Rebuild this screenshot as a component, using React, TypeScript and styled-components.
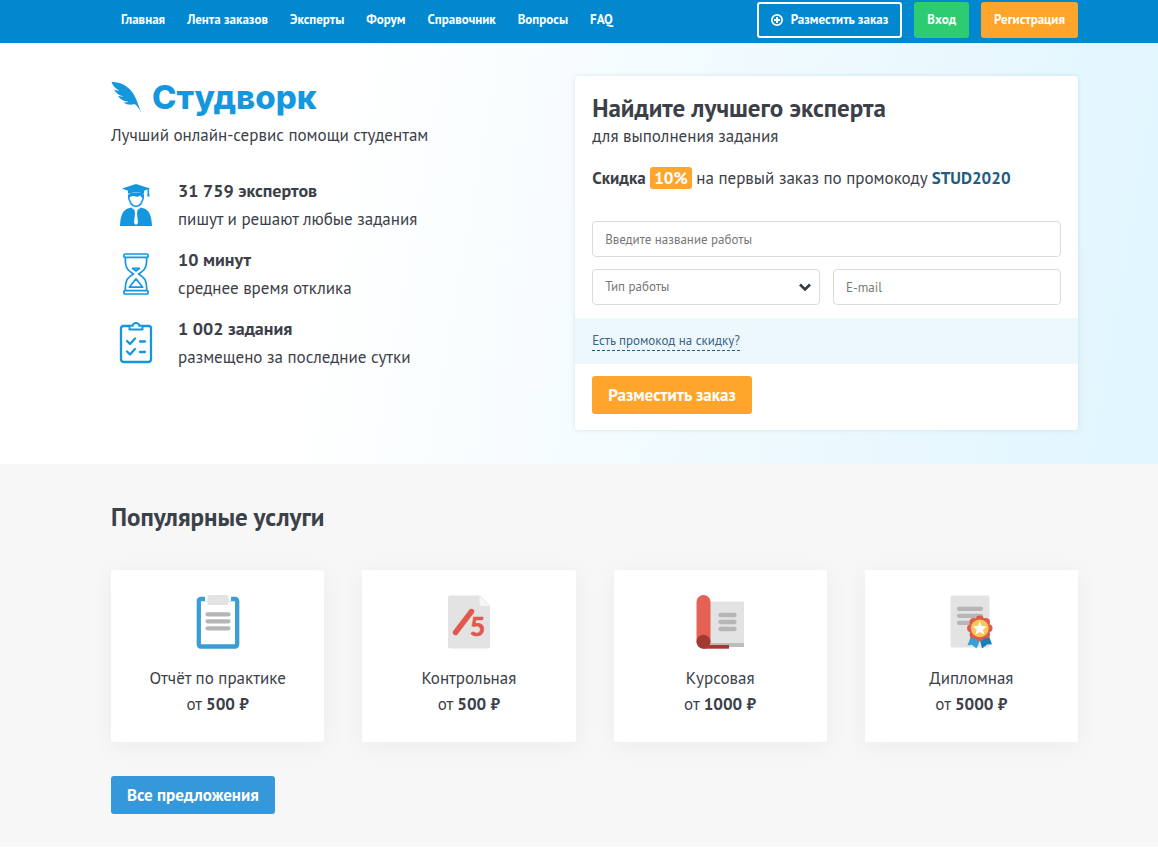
import React from "react";
import styled, { createGlobalStyle, css } from "styled-components";

const GlobalStyle = createGlobalStyle`
  *, *::before, *::after { box-sizing: border-box; }
  body {
    margin: 0;
    background: #fff;
    color: #3c4048;
    font: 17px/24px "PT Sans", "Noto Sans", sans-serif;
  }
  button, input, select { font-family: inherit; }
  h1, h2, p, ul { margin: 0; padding: 0; }
  ul { list-style: none; }
  svg { display: block; }
`;

const gutters = css`
  padding-left: 111px;
  padding-right: 80px;
`;

/* Top bar */

const Header = styled.header`
  ${gutters}
  display: flex;
  align-items: flex-start;
  justify-content: space-between;
  height: 43px;
  padding-top: 2px;
  background: #0288cf;
`;

const Nav = styled.nav`
  display: flex;
  align-items: center;
  gap: 22px;
  height: 36px;
  padding-left: 10px;
`;

const NavLink = styled.a`
  color: #fff;
  font-size: 13px;
  font-weight: 700;
  line-height: 16px;
  text-decoration: none;
  white-space: nowrap;
`;

const Actions = styled.div`
  display: flex;
  gap: 12px;
`;

const HeaderButton = styled.button<{ $fill?: string }>`
  display: flex;
  align-items: center;
  gap: 8px;
  height: 36px;
  padding: 0 ${(p) => (p.$fill ? 13 : 12)}px;
  border: ${(p) => (p.$fill ? "0" : "2px solid #fff")};
  border-radius: 3px;
  background: ${(p) => p.$fill ?? "transparent"};
  color: #fff;
  font-size: 13px;
  font-weight: 700;
  line-height: 16px;
  white-space: nowrap;
  cursor: pointer;
`;

/* Hero */

const Hero = styled.section`
  ${gutters}
  display: grid;
  grid-template-columns: 12fr 13fr;
  align-items: start;
  padding-top: 33px;
  padding-bottom: 34px;
  background: linear-gradient(100deg, #fff 28%, #e2f6fe 95%);
`;

const Logo = styled.a`
  display: flex;
  align-items: center;
  gap: 10px;
  height: 42px;
  color: #1597e0;
  font: 800 33px/42px Inter, sans-serif;
  text-decoration: none;
`;

const Tagline = styled.p`
  padding-top: 5px;
`;

const Stats = styled.ul`
  display: grid;
  gap: 13px;
  padding-top: 30px;
`;

const Stat = styled.li`
  display: flex;
  align-items: center;
  gap: 25px;
  padding-left: 8px;
`;

const StatIcon = styled.svg`
  flex: none;
  width: 34px;
  height: 44px;
`;

const StatText = styled.p`
  line-height: 28px;
`;

const StatValue = styled.strong`
  display: block;
  font-size: 18px;
`;

/* Order form */

const OrderForm = styled.form`
  padding-bottom: 16px;
  border-radius: 4px;
  background: #fff;
  box-shadow: 0 0 5px rgba(40, 90, 130, 0.14);
`;

const FormBody = styled.div`
  padding: 16px 17px 13px;
`;

const FormTitle = styled.h1`
  font-size: 25px;
  line-height: 32px;
`;

const Promo = styled.p`
  padding: 18px 0 31px;
`;

const Discount = styled.mark`
  padding: 0 4px;
  border-radius: 3px;
  background: #ffa52b;
  color: #fff;
  font-weight: 700;
`;

const PromoCode = styled.strong`
  color: #245b80;
`;

const Fields = styled.div`
  display: grid;
  grid-template-columns: 1fr 1fr;
  gap: 12px 13px;
`;

const fieldStyle = css`
  width: 100%;
  height: 36px;
  padding: 0 12px;
  border: 1px solid #d9dcde;
  border-radius: 4px;
  background: #fff;
  color: #777;
  font-size: 13px;
  line-height: 16px;
`;

const TextField = styled.input<{ $wide?: boolean }>`
  ${fieldStyle}
  grid-column: ${(p) => (p.$wide ? "1 / -1" : "auto")};
  &::placeholder { color: #777; opacity: 1; }
`;

const SelectWrap = styled.div`
  position: relative;
`;

const Select = styled.select`
  ${fieldStyle}
  appearance: none;
`;

const Chevron = styled.svg`
  position: absolute;
  top: 14px;
  right: 9px;
  width: 12px;
  height: 9px;
  pointer-events: none;
`;

const PromoBand = styled.div`
  display: flex;
  align-items: center;
  height: 46px;
  padding: 0 17px;
  background: #ecf8fe;
`;

const PromoLink = styled.a`
  border-bottom: 1px dashed #245b80;
  color: #3c6382;
  font-size: 13px;
  line-height: 18px;
  text-decoration: none;
`;

const FormFooter = styled.div`
  padding: 12px 17px 0;
`;

const MainButton = styled.button<{ $fill: string }>`
  display: block;
  height: 38px;
  padding: 0 16px;
  border: 0;
  border-radius: 3px;
  background: ${(p) => p.$fill};
  color: #fff;
  font-size: 17px;
  font-weight: 700;
  line-height: 24px;
  cursor: pointer;
`;

/* Services */

const Services = styled.section`
  ${gutters}
  padding-top: 37px;
  padding-bottom: 33px;
  background: #f7f7f7;
`;

const SectionTitle = styled.h2`
  font-size: 25px;
  line-height: 32px;
`;

const ServiceGrid = styled.ul`
  display: grid;
  grid-template-columns: repeat(4, 1fr);
  gap: 38px;
  padding: 37px 0 34px;
`;

const ServiceCard = styled.li`
  display: flex;
  flex-direction: column;
  align-items: center;
  height: 172px;
  padding-top: 24px;
  border-radius: 2px;
  background: #fff;
  box-shadow: 0 4px 24px rgba(0, 0, 0, 0.05);
  line-height: 26px;
`;

const ServiceIcon = styled.svg`
  width: 56px;
  height: 56px;
  margin-bottom: 15px;
`;

const NAV = ["Главная", "Лента заказов", "Эксперты", "Форум", "Справочник", "Вопросы", "FAQ"];

const BLUE = "#1597e0";

const Feather = () => (
  <svg width="31" height="32" viewBox="0 0 31 32" fill={BLUE}>
    <path d="M.5 1C8 1 14 3.500 18.500 8c6 6 8 13.500 11.500 23.500-2.200-4.500-4-7-6.500-8.500-3.500 1.200-8 .8-11-1.500 2.200.2 4 .1 5-.7C13 20.500 9 18.500 7 14.800c2 .8 4.200 1 5.500.6C8.300 14.500 4.800 12.300 3 8.600c1.800.9 3.900 1.300 5.300 1C4.700 7.800 1.800 4.800.5 1Z" />
  </svg>
);

const PlusCircle = () => (
  <svg width="12" height="12" viewBox="0 0 12 12">
    <path
      fill="#fff"
      fillRule="evenodd"
      d="M6 0a6 6 0 1 1 0 12A6 6 0 0 1 6 0Zm0 1.700a4.300 4.300 0 1 0 0 8.600 4.300 4.300 0 0 0 0-8.600Z"
    />
    <path d="M5 3h2v2h2v2H7v2H5V7H3V5h2Z" fill="#fff" />
  </svg>
);

const ExpertIcon = () => (
  <StatIcon viewBox="0 0 34 44" fill={BLUE}>
    <path d="M17 1 3 5.500l6 2.200v3.100c4.500-1.600 11.500-1.600 16 0V7.700l3.500-1.200V11h1.600V6L31 5.500Z" />
    <path d="M28.300 11h2.200v2.500h-2.200z" />
    <path d="M9.700 11.500c-.5 6.500 3 11.800 7.300 11.800s7.800-5.300 7.300-11.800" fill="none" stroke={BLUE} strokeWidth="1.600" />
    <path d="M9.500 15c0-3 .8-4.600 2.500-5.200h11c1.600.8 2 2.200 1.800 5.200-1.800-.5-2.800-1.200-3.600-2.600-1.600 1.200-4 1.800-6 .7-2 0-4.300.6-5.700 1.900Z" />
    <path d="M12 24.500 17 28l5-3.500c6.500 1.500 10.500 4.500 11 18.500H1c.5-14 4.500-17 11-18.500Z" />
    <path d="M15.500 27.500h3l-.5 3 1 9.500-2 2-2-2 1-9.500Z" fill="#fff" />
    <path d="m13 24.500 4 3.800 4-3.800-4 1.500Z" fill="#fff" />
  </StatIcon>
);

const HourglassIcon = () => (
  <StatIcon viewBox="0 0 34 44" fill="none" stroke={BLUE} strokeWidth="1.700" strokeLinejoin="round">
    <rect x="4.800" y="2" width="24.400" height="3.400" rx="1.700" />
    <rect x="4.800" y="38.600" width="24.400" height="3.400" rx="1.700" />
    <path d="M6.300 5.400c0 9.500 1 12.100 8.200 16.600-7.200 4.500-8.200 7.100-8.200 16.600M27.700 5.400c0 9.500-1 12.100-8.200 16.600 7.200 4.500 8.200 7.100 8.200 16.600" />
    <path d="M13.500 16.300h7L17 19Z" />
    <path d="m17 26.800-6.700 8.400h13.400Z" />
  </StatIcon>
);

const ChecklistIcon = () => (
  <StatIcon viewBox="0 0 34 44" fill="none" stroke={BLUE} strokeWidth="2.300" strokeLinecap="round" strokeLinejoin="round">
    <path d="M10 5H4.500Q2 5 2 7.500V38q0 3 3 3h24q3 0 3-3V7.500Q32 5 29.500 5H24" />
    <path d="M10.500 8.500V4.800h3.200C14 2.800 15.200 2 17 2s3 .8 3.300 2.800h3.200v3.700Z" strokeWidth="2" />
    <path d="m8 20 3 3 5-5.500M21 20.500h5M8 30.500l3 3 5-5.500M21 31h5" />
  </StatIcon>
);

const ReportIcon = () => (
  <ServiceIcon viewBox="0 0 56 56">
    <rect x="8.800" y="5" width="38.400" height="47.500" rx="2" fill="#fff" stroke="#3a9dd3" strokeWidth="4.300" />
    <rect x="15" y="2" width="26" height="5" fill="#fff" />
    <rect x="17.500" y="1" width="21" height="10" rx="1.500" fill="#e3e3e3" />
    <path d="M17.500 20.300h21M17.500 27.300h21M17.500 34.300h21" stroke="#b6b6b6" strokeWidth="4.300" strokeLinecap="round" />
  </ServiceIcon>
);

const TestIcon = () => (
  <ServiceIcon viewBox="0 0 56 56">
    <path d="M9 1.500h30.500l9.500 10V52q0 2.500-2.500 2.500h-37Q7 54.500 7 52V3.500q0-2 2-2Z" fill="#e3e3e3" />
    <path d="M38.500 1.500 49 12h-8.500q-2 0-2-2Z" fill="#f6f6f6" />
    <path d="M14.500 38.500 30.500 17.500" stroke="#e1594c" strokeWidth="5.400" strokeLinecap="round" />
    <text x="29" y="42" fill="#e1594c" stroke="#e1594c" strokeWidth="0.700" fontFamily="Lato, sans-serif" fontSize="26" fontWeight="700">5</text>
  </ServiceIcon>
);

const CourseIcon = () => (
  <ServiceIcon viewBox="0 0 56 56">
    <path d="M18 7.500h34V52.500H18Z" fill="#e3e3e3" />
    <path d="M18 49h34v4H18Z" fill="#bdbdbd" />
    <path d="M11 51h26v3.700H11Z" fill="#a33a32" />
    <rect x="4.500" y="1" width="14" height="53.500" rx="7" fill="#e46153" />
    <circle cx="11.500" cy="47.700" r="7" fill="#a33a32" />
    <path d="M28.500 21h14M28.500 28h14M28.500 35h14" stroke="#b6b6b6" strokeWidth="4.300" strokeLinecap="round" />
  </ServiceIcon>
);

const DiplomaIcon = () => (
  <ServiceIcon viewBox="0 0 56 56">
    <rect x="7.500" y="1.500" width="39" height="52" rx="2" fill="#e3e3e3" />
    <path d="M16 14.800h22M16 21.800h22M16 28.800h12" stroke="#b6b6b6" strokeWidth="4.300" strokeLinecap="round" />
    <path d="m28 42-3.500 9.500 4.500-.7 4.500 3.700L38 44Z" fill="#3a9dd3" />
    <path d="m46 42 3 8.500-4.500-.2-5.500 4.200L36.500 44Z" fill="#1580b5" />
    {Array.from({ length: 8 }, (_, i) => (
      <circle
        key={i}
        cx={36.800 + 8.600 * Math.cos((i * Math.PI) / 4)}
        cy={34.300 + 8.600 * Math.sin((i * Math.PI) / 4)}
        r="4.100"
        fill="#dd5c49"
      />
    ))}
    <circle cx="36.800" cy="34.300" r="8.900" fill="#fbc65c" />
    <path d="m36.800 27.500 2 4.500 4.900.5-3.700 3.200 1.100 4.800-4.300-2.500-4.300 2.500 1.100-4.800-3.700-3.200 4.900-.5Z" fill="#fff" />
  </ServiceIcon>
);

const STATS = [
  { icon: <ExpertIcon />, value: "31 759 экспертов", text: "пишут и решают любые задания" },
  { icon: <HourglassIcon />, value: "10 минут", text: "среднее время отклика" },
  { icon: <ChecklistIcon />, value: "1 002 задания", text: "размещено за последние сутки" },
];

const SERVICES = [
  { icon: <ReportIcon />, name: "Отчёт по практике", price: "500 ₽" },
  { icon: <TestIcon />, name: "Контрольная", price: "500 ₽" },
  { icon: <CourseIcon />, name: "Курсовая", price: "1000 ₽" },
  { icon: <DiplomaIcon />, name: "Дипломная", price: "5000 ₽" },
];

export default function App() {
  return (
    <>
      <GlobalStyle />
      <Header>
        <Nav>
          {NAV.map((item) => (
            <NavLink key={item} href="#">{item}</NavLink>
          ))}
        </Nav>
        <Actions>
          <HeaderButton type="button">
            <PlusCircle />
            Разместить заказ
          </HeaderButton>
          <HeaderButton type="button" $fill="#2ecc71">Вход</HeaderButton>
          <HeaderButton type="button" $fill="#ffa52b">Регистрация</HeaderButton>
        </Actions>
      </Header>
      <main>
        <Hero>
          <div>
            <Logo href="#">
              <Feather />
              Студворк
            </Logo>
            <Tagline>Лучший онлайн-сервис помощи студентам</Tagline>
            <Stats>
              {STATS.map((s) => (
                <Stat key={s.value}>
                  {s.icon}
                  <StatText>
                    <StatValue>{s.value}</StatValue>
                    {s.text}
                  </StatText>
                </Stat>
              ))}
            </Stats>
          </div>
          <OrderForm>
            <FormBody>
              <FormTitle>Найдите лучшего эксперта</FormTitle>
              <p>для выполнения задания</p>
              <Promo>
                <strong>Скидка</strong> <Discount>10%</Discount> на первый заказ по промокоду{" "}
                <PromoCode>STUD2020</PromoCode>
              </Promo>
              <Fields>
                <TextField $wide type="text" aria-label="Введите название работы" placeholder="Введите название работы" />
                <SelectWrap>
                  <Select aria-label="Тип работы" defaultValue="">
                    <option value="">Тип работы</option>
                  </Select>
                  <Chevron viewBox="0 0 12 9" fill="none" stroke="#333a42" strokeWidth="2.600">
                    <path d="m1 1.500 5 5 5-5" />
                  </Chevron>
                </SelectWrap>
                <TextField type="email" aria-label="E-mail" placeholder="E-mail" />
              </Fields>
            </FormBody>
            <PromoBand>
              <PromoLink href="#">Есть промокод на скидку?</PromoLink>
            </PromoBand>
            <FormFooter>
              <MainButton type="button" $fill="#ffa52b">Разместить заказ</MainButton>
            </FormFooter>
          </OrderForm>
        </Hero>
        <Services>
          <SectionTitle>Популярные услуги</SectionTitle>
          <ServiceGrid>
            {SERVICES.map((s) => (
              <ServiceCard key={s.name}>
                {s.icon}
                <span>{s.name}</span>
                <span>от <strong>{s.price}</strong></span>
              </ServiceCard>
            ))}
          </ServiceGrid>
          <MainButton type="button" $fill="#3498db">Все предложения</MainButton>
        </Services>
      </main>
    </>
  );
}
